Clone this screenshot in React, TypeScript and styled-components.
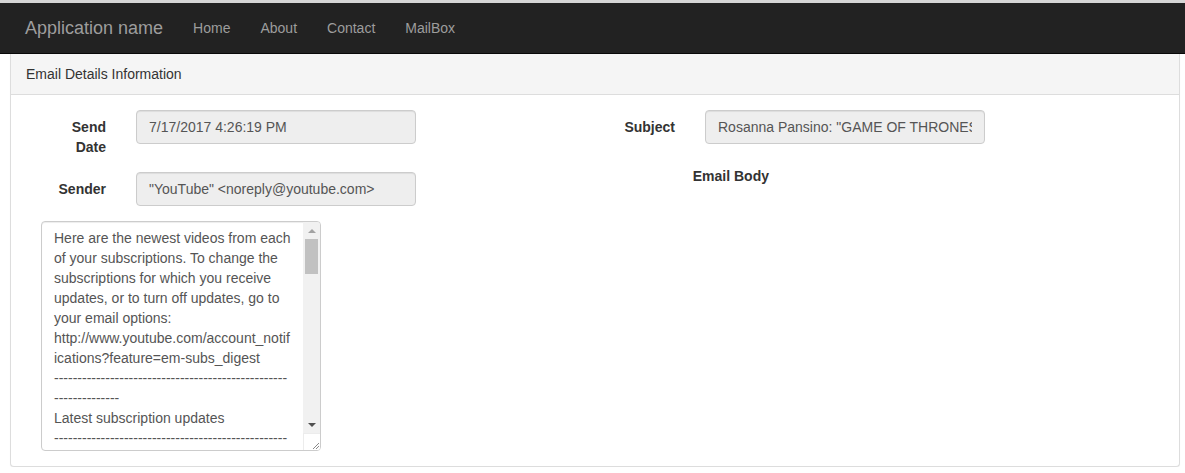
import styled, { createGlobalStyle } from 'styled-components';

const GlobalStyle = createGlobalStyle`
  * {
    box-sizing: border-box;
  }

  html,
  body {
    margin: 0;
    padding: 0;
    background: #fff;
  }

  body {
    font-family: 'Liberation Sans', Arial, Helvetica, sans-serif;
    font-size: 14px;
    line-height: 20px;
    color: #333;
  }
`;

const NAV_LINKS = ['Home', 'About', 'Contact', 'MailBox'];

const DASHES = '-'.repeat(64);

const BODY_TEXT = [
  'Here are the newest videos from each of your subscriptions. To change the subscriptions for which you receive updates, or to turn off updates, go to your email options:',
  'http://www.youtube.com/account_notifications?feature=em-subs_digest',
  DASHES,
  'Latest subscription updates',
  DASHES,
  '',
  'Rosanna Pansino: "GAME OF THRONES CAKE!" - NERDY NUMMIES',
  'http://www.youtube.com/watch?v=0kF1b3xJ4wQ&feature=em-subs_digest',
  '',
  'Rosanna Pansino has uploaded a new video.',
  'Watch it now, or add it to your Watch Later list.',
  '',
  DASHES,
  'Other recommended videos',
  DASHES,
  '',
  'How To Make A Dragon Egg Cake',
  'http://www.youtube.com/watch?v=Q7pX2mFv0nE&feature=em-subs_digest',
  '',
  'Help center: https://support.google.com/youtube',
  'Email options: http://www.youtube.com/account_notifications',
  '',
  '© 2017 YouTube, LLC 901 Cherry Ave, San Bruno, CA 94066, USA',
].join('\n');

const Page = styled.div`
  border-top: 3px solid #d6d6d6;
`;

const Navbar = styled.nav`
  display: flex;
  align-items: center;
  height: 51px;
  padding: 0 0 0 10px;
  background: #222;
  border-bottom: 1px solid #080808;
`;

const Brand = styled.a`
  padding: 15px;
  font-size: 18px;
  line-height: 20px;
  color: #9d9d9d;
  text-decoration: none;
`;

const NavList = styled.ul`
  display: flex;
  margin: 0;
  padding: 0;
  list-style: none;
`;

const NavLink = styled.a`
  display: block;
  padding: 15px;
  font-size: 14px;
  line-height: 20px;
  color: #9d9d9d;
  text-decoration: none;
`;

const Panel = styled.section`
  width: 1170px;
  margin-left: 10px;
  border: 1px solid #ddd;
  border-top: none;
  border-radius: 0 0 4px 4px;
  background: #fff;
  box-shadow: 0 1px 1px rgba(0, 0, 0, 0.05);
`;

const PanelHeading = styled.header`
  padding: 10px 15px;
  background: #f5f5f5;
  border-bottom: 1px solid #ddd;
  color: #333;
`;

const PanelBody = styled.div`
  display: grid;
  grid-template-columns: 1fr 1fr;
  padding: 15px;
`;

const Column = styled.div`
  display: flex;
  flex-direction: column;
  gap: 15px;
`;

const FormRow = styled.div<{ $labelWidth?: number }>`
  display: grid;
  grid-template-columns: ${({ $labelWidth }) => $labelWidth ?? 95}px 1fr;
  align-items: start;
`;

const Label = styled.label`
  padding: 7px 15px 0;
  font-weight: bold;
  text-align: right;
  color: #333;
`;

const Control = styled.div`
  padding-left: 15px;
`;

const Input = styled.input`
  display: block;
  width: 280px;
  height: 34px;
  padding: 6px 12px;
  font-family: inherit;
  font-size: 14px;
  line-height: 20px;
  color: #555;
  background: #eee;
  border: 1px solid #ccc;
  border-radius: 4px;
  box-shadow: inset 0 1px 1px rgba(0, 0, 0, 0.075);
  outline: none;
`;

const BodyBox = styled.div`
  position: relative;
  width: 280px;
  margin-left: 15px;
`;

const BodyArea = styled.textarea`
  display: block;
  width: 280px;
  height: 230px;
  margin: 0;
  padding: 6px 29px 6px 12px;
  font-family: inherit;
  font-size: 14px;
  line-height: 20px;
  color: #555;
  background: #fff;
  border: 1px solid #ccc;
  border-radius: 4px;
  box-shadow: inset 0 1px 1px rgba(0, 0, 0, 0.075);
  outline: none;
  overflow: hidden;
  resize: none;
`;

/* Classic Windows-style scrollbar, drawn over the textarea's right edge. */
const Scrollbar = styled.div`
  position: absolute;
  top: 1px;
  right: 1px;
  bottom: 1px;
  width: 17px;
  display: flex;
  flex-direction: column;
  background: #f1f1f1;
  border-radius: 0 3px 3px 0;
  overflow: hidden;
`;

const ArrowButton = styled.div<{ $dir: 'up' | 'down' }>`
  flex: 0 0 17px;
  display: flex;
  align-items: center;
  justify-content: center;

  &::before {
    content: '';
    width: 0;
    height: 0;
    border-left: 4px solid transparent;
    border-right: 4px solid transparent;
    ${({ $dir }) =>
      $dir === 'up' ? 'border-bottom: 4px solid #a3a3a3;' : 'border-top: 4px solid #505050;'}
  }
`;

const Track = styled.div`
  flex: 1 1 auto;
  padding: 0 2px;
`;

const Thumb = styled.div`
  height: 35px;
  background: #c1c1c1;
`;

const Corner = styled.div`
  flex: 0 0 17px;
  display: flex;
  align-items: flex-end;
  justify-content: flex-end;
  background: #fff;
  border-top: 1px solid #ececec;
  border-left: 1px solid #ececec;
`;

function ResizeGrip() {
  return (
    <svg width="10" height="10" viewBox="0 0 10 10" aria-hidden="true">
      <path d="M9 3L3 9M9 6L6 9" stroke="#8a8a8a" strokeWidth="1" fill="none" />
    </svg>
  );
}

export default function App() {
  return (
    <Page>
      <GlobalStyle />
      <Navbar>
        <Brand href="#">Application name</Brand>
        <NavList>
          {NAV_LINKS.map((link) => (
            <li key={link}>
              <NavLink href="#">{link}</NavLink>
            </li>
          ))}
        </NavList>
      </Navbar>

      <Panel>
        <PanelHeading>Email Details Information</PanelHeading>
        <PanelBody>
          <Column>
            <FormRow>
              <Label>Send Date</Label>
              <Control>
                <Input readOnly value="7/17/2017 4:26:19 PM" />
              </Control>
            </FormRow>
            <FormRow>
              <Label>Sender</Label>
              <Control>
                <Input readOnly value={'"YouTube" <noreply@youtube.com>'} />
              </Control>
            </FormRow>
            <BodyBox>
              <BodyArea readOnly value={BODY_TEXT} />
              <Scrollbar aria-hidden="true">
                <ArrowButton $dir="up" />
                <Track>
                  <Thumb />
                </Track>
                <ArrowButton $dir="down" />
                <Corner>
                  <ResizeGrip />
                </Corner>
              </Scrollbar>
            </BodyBox>
          </Column>

          <Column>
            <FormRow>
              <Label>Subject</Label>
              <Control>
                <Input readOnly value={'Rosanna Pansino: "GAME OF THRONES CAKE!" - NERDY NUMMIES'} />
              </Control>
            </FormRow>
            <FormRow $labelWidth={189}>
              <Label>Email Body</Label>
            </FormRow>
          </Column>
        </PanelBody>
      </Panel>
    </Page>
  );
}
